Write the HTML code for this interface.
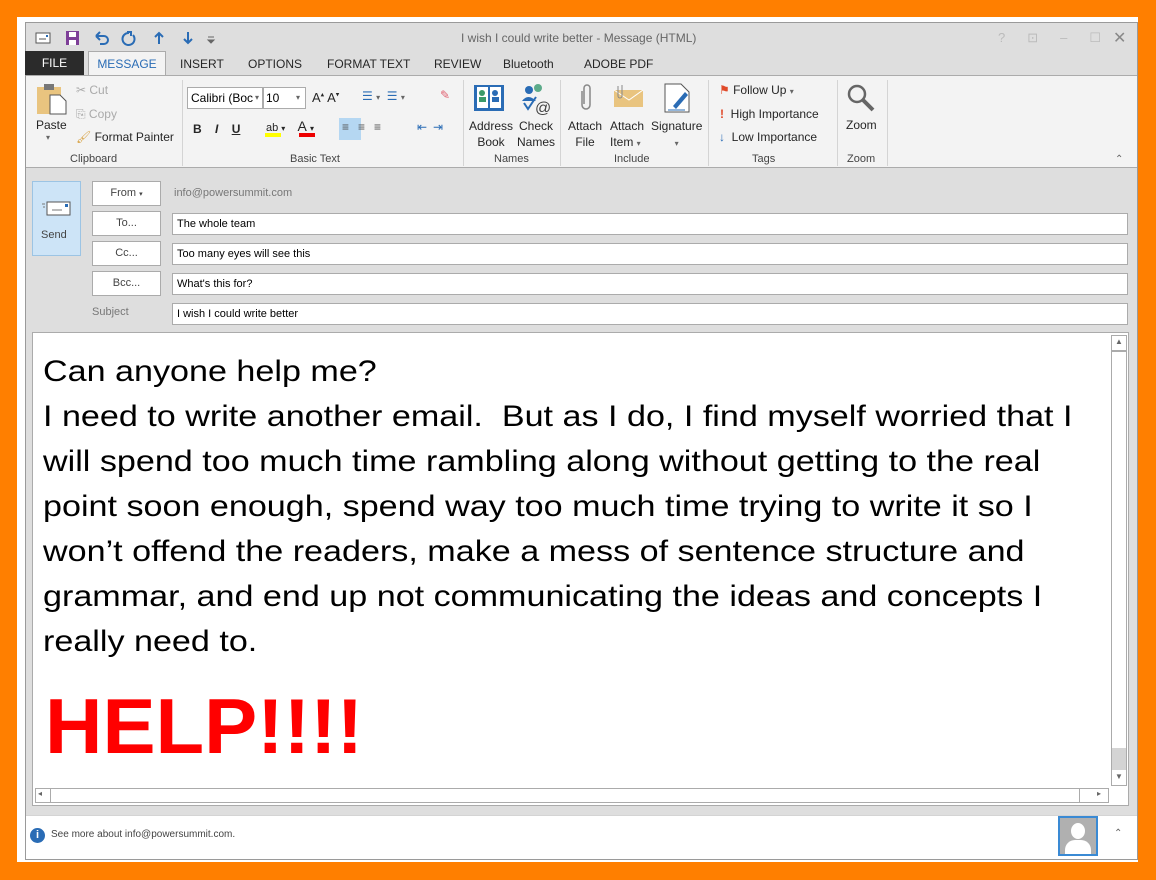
<!DOCTYPE html>
<html><head><meta charset="utf-8">
<style>
*{box-sizing:border-box;margin:0;padding:0}
body{width:1156px;height:880px;background:#ff7f00;position:relative;overflow:hidden;font-family:"Liberation Sans",sans-serif;color:#262626}
.a{position:absolute}
.t{font-size:12px;white-space:nowrap}
.btn{position:absolute;background:#fff;border:1px solid #ababab;font-size:11px;text-align:center;line-height:23px;color:#444}
.fld{position:absolute;left:172px;width:956px;height:22px;background:#fff;border:1px solid #ababab;font-size:11px;line-height:20px;padding-left:4px;color:#000}
.sep{position:absolute;top:80px;width:1px;height:86px;background:#d4d4d4}
.gl{position:absolute;top:153px;font-size:11px;color:#444}
.body{font-size:30px;line-height:45px;color:#000;white-space:nowrap;transform:scaleX(1.137);transform-origin:left top}
</style></head><body>
<div class="a" style="left:17px;top:17px;width:1121px;height:845px;background:#fff"></div>
<div class="a" style="left:25px;top:22px;width:1113px;height:838px;background:#dedede;border:1px solid #9a9a9a"></div>
<!-- title bar -->
<svg class="a" style="left:34px;top:30px" width="190" height="16">
<rect x="2" y="3" width="14" height="10" fill="#fff" stroke="#555"/><line x1="5" y1="9" x2="12" y2="9" stroke="#555"/><rect x="12" y="5" width="2" height="2" fill="#2a6cb5"/>
<rect x="32" y="1" width="13" height="14" fill="#7e3f98"/><rect x="35" y="2" width="7" height="5" fill="#fff"/><rect x="35" y="10" width="7" height="5" fill="#fff"/>
<path d="M62 6 h8 a4 4 0 0 1 0 8 h-4 M62 6 l4 -4 M62 6 l4 4" stroke="#2a6cb5" stroke-width="2" fill="none"/>
<path d="M95 3 a6 6 0 1 0 4 2 M93 2 h4 v4" stroke="#2a6cb5" stroke-width="2" fill="none"/>
<path d="M125 14 v-11 M121 7 l4 -4 4 4" stroke="#2a6cb5" stroke-width="2" fill="none"/>
<path d="M154 2 v11 M150 9 l4 4 4 -4" stroke="#2a6cb5" stroke-width="2" fill="none"/>
<path d="M174 7 h6 M174 10 l3 3 3 -3z" stroke="#666" fill="#666"/>
</svg>
<div class="a t" style="left:461px;top:31px;color:#666">I wish I could write better - Message (HTML)</div>
<div class="a t" style="left:998px;top:30px;color:#bbb;font-size:13px;letter-spacing:22px">?⊡–☐</div>
<div class="a t" style="left:1113px;top:28px;color:#888;font-size:16px">✕</div>
<!-- tabs -->
<div class="a" style="left:25px;top:51px;width:59px;height:24px;background:#2b2b2b;color:#fff;font-size:12px;text-align:center;line-height:24px">FILE</div>
<div class="a" style="left:88px;top:51px;width:78px;height:25px;background:#f3f3f3;border:1px solid #ababab;border-bottom:none;color:#2a6cb5;font-size:12px;text-align:center;line-height:24px">MESSAGE</div>
<div class="a t" style="left:180px;top:57px">INSERT</div>
<div class="a t" style="left:248px;top:57px">OPTIONS</div>
<div class="a t" style="left:327px;top:57px">FORMAT TEXT</div>
<div class="a t" style="left:434px;top:57px">REVIEW</div>
<div class="a t" style="left:503px;top:57px">Bluetooth</div>
<div class="a t" style="left:584px;top:57px">ADOBE PDF</div>
<!-- ribbon -->
<div class="a" style="left:26px;top:75px;width:1111px;height:93px;background:#f3f3f3;border-top:1px solid #ababab;border-bottom:1px solid #ababab"></div>
<svg class="a" style="left:36px;top:83px" width="32" height="32"><rect x="1" y="4" width="24" height="27" fill="#e9c47f"/><rect x="8" y="1" width="10" height="6" fill="#777"/><path d="M14 12 h10 l6 6 v13 h-16z" fill="#fff" stroke="#555"/></svg>
<div class="a t" style="left:36px;top:118px">Paste</div>
<div class="a t" style="left:46px;top:133px;font-size:8px;color:#666">▾</div>
<div class="a t" style="left:76px;top:83px;color:#aaa">✂ Cut</div>
<div class="a t" style="left:76px;top:107px;color:#aaa">⎘ Copy</div>
<div class="a t" style="left:76px;top:130px"><span style="color:#d9a54a">🖌</span> Format Painter</div>
<div class="gl" style="left:70px">Clipboard</div>
<div class="sep" style="left:182px"></div>
<div class="a t" style="left:187px;top:87px;width:76px;height:22px;background:#fff;border:1px solid #ababab;font-size:12px;line-height:20px;padding-left:3px;color:#000;overflow:hidden">Calibri (Boc<span style="position:absolute;right:3px;font-size:8px;color:#666">▾</span></div>
<div class="a t" style="left:263px;top:87px;width:43px;height:22px;background:#fff;border:1px solid #ababab;font-size:12px;line-height:20px;padding-left:2px;color:#000">10<span style="position:absolute;right:5px;font-size:8px;color:#666">▾</span></div>
<div class="a t" style="left:312px;top:90px;font-size:13px">A<sup style="font-size:7px">▴</sup> A<sup style="font-size:7px">▾</sup></div>
<div class="a t" style="left:362px;top:89px;color:#2a6cb5">☰ <span style="font-size:8px;color:#666">▾</span>&nbsp;&nbsp;☰ <span style="font-size:8px;color:#666">▾</span></div>
<div class="a t" style="left:440px;top:88px;color:#e06070">✎</div>
<div class="a t" style="left:193px;top:122px;font-weight:bold">B&nbsp;&nbsp;&nbsp;&nbsp;<i>I</i>&nbsp;&nbsp;&nbsp;&nbsp;<u>U</u></div>
<div class="a" style="left:265px;top:133px;width:16px;height:4px;background:#ff0"></div>
<div class="a" style="left:299px;top:133px;width:16px;height:4px;background:#e00"></div>
<div class="a t" style="left:266px;top:118px;font-size:11px">ab&nbsp;<span style="font-size:8px">▾</span>&nbsp;&nbsp;&nbsp;&nbsp;<span style="font-size:14px">A</span>&nbsp;<span style="font-size:8px">▾</span></div>
<div class="a" style="left:339px;top:118px;width:22px;height:22px;background:#b5d7f2"></div>
<div class="a t" style="left:342px;top:120px;color:#555;letter-spacing:9px">≡≡≡</div>
<div class="a t" style="left:417px;top:120px;color:#2a6cb5;letter-spacing:6px">⇤⇥</div>
<div class="gl" style="left:290px">Basic Text</div>
<div class="sep" style="left:463px"></div>
<svg class="a" style="left:473px;top:83px" width="32" height="30"><rect x="1" y="2" width="30" height="26" fill="#2a6cb5"/><rect x="4" y="4" width="11" height="21" fill="#fff"/><rect x="17" y="4" width="11" height="21" fill="#fff"/><circle cx="9" cy="10" r="3" fill="#3a9a6a"/><circle cx="22" cy="10" r="3" fill="#2a6cb5"/><rect x="6" y="14" width="7" height="5" fill="#3a9a6a"/><rect x="19" y="14" width="7" height="5" fill="#2a6cb5"/></svg>
<svg class="a" style="left:520px;top:83px" width="32" height="32"><circle cx="9" cy="7" r="4" fill="#2a6cb5"/><circle cx="18" cy="5" r="4" fill="#5cab8a"/><path d="M2 18 q6-8 14 0z" fill="#2a6cb5"/><path d="M4 20 l4 6 8 -12" stroke="#2a6cb5" stroke-width="2" fill="none"/><text x="15" y="30" font-size="16" fill="#444" font-family="Liberation Sans">@</text></svg>
<div class="a t" style="left:469px;top:118px;line-height:16px;text-align:center">Address<br>Book</div>
<div class="a t" style="left:517px;top:118px;line-height:16px;text-align:center">Check<br>Names</div>
<div class="gl" style="left:494px">Names</div>
<div class="sep" style="left:560px"></div>
<svg class="a" style="left:578px;top:83px" width="16" height="30"><path d="M4 8 v14 a4 4 0 0 0 8 0 v-17 a3 3 0 0 0 -6 0 v16" stroke="#888" stroke-width="1.5" fill="none"/></svg>
<svg class="a" style="left:613px;top:83px" width="32" height="26"><rect x="1" y="7" width="29" height="17" fill="#e9c47f"/><path d="M1 7 l15 10 14 -10" stroke="#fff" fill="none"/><path d="M5 3 v10 a2 2 0 0 0 4 0 v-11" stroke="#888" fill="none"/></svg>
<svg class="a" style="left:663px;top:82px" width="30" height="32"><path d="M2 2 h16 l8 8 v20 h-24z" fill="#fff" stroke="#555"/><path d="M10 24 l12 -14 3 3 -12 14z" fill="#2a6cb5"/><line x1="5" y1="28" x2="22" y2="28" stroke="#2a6cb5"/></svg>
<div class="a t" style="left:568px;top:118px;line-height:16px;text-align:center">Attach<br>File</div>
<div class="a t" style="left:610px;top:118px;line-height:16px">Attach<br>Item <span style="font-size:8px;color:#666">▾</span></div>
<div class="a t" style="left:651px;top:118px;line-height:16px;text-align:center">Signature<br><span style="font-size:8px;color:#666">▾</span></div>
<div class="gl" style="left:614px">Include</div>
<div class="sep" style="left:708px"></div>
<div class="a t" style="left:719px;top:83px"><span style="color:#e04a2a">⚑</span> Follow Up <span style="font-size:8px;color:#666">▾</span></div>
<div class="a t" style="left:720px;top:107px"><b style="color:#e04a2a">!</b>&nbsp; High Importance</div>
<div class="a t" style="left:719px;top:130px"><span style="color:#2a6cb5">↓</span>&nbsp; Low Importance</div>
<div class="gl" style="left:752px">Tags</div>
<div class="sep" style="left:837px"></div>
<svg class="a" style="left:846px;top:83px" width="30" height="30"><circle cx="11" cy="11" r="8" stroke="#666" stroke-width="2.5" fill="none"/><line x1="17" y1="17" x2="27" y2="27" stroke="#666" stroke-width="4"/></svg>
<div class="a t" style="left:846px;top:118px">Zoom</div>
<div class="gl" style="left:847px">Zoom</div>
<div class="sep" style="left:887px"></div>
<div class="a t" style="left:1115px;top:154px;font-size:10px;color:#666">⌃</div>
<!-- header -->
<div class="a" style="left:32px;top:181px;width:49px;height:75px;background:#cde4f7;border:1px solid #9cc4e4"></div>
<svg class="a" style="left:42px;top:201px" width="30" height="16"><rect x="5" y="1" width="23" height="13" fill="#fff" stroke="#555"/><rect x="23" y="3" width="3" height="3" fill="#2a6cb5"/><line x1="10" y1="9" x2="20" y2="9" stroke="#777"/><path d="M0 3h3M1 6h2" stroke="#777"/></svg>
<div class="a" style="left:41px;top:229px;font-size:11px;color:#444">Send</div>
<div class="btn" style="left:92px;top:181px;width:69px;height:25px">From <span style="font-size:7px">▾</span></div>
<div class="a" style="left:174px;top:187px;font-size:11px;color:#777">info@powersummit.com</div>
<div class="btn" style="left:92px;top:211px;width:69px;height:25px">To...</div>
<div class="btn" style="left:92px;top:241px;width:69px;height:25px">Cc...</div>
<div class="btn" style="left:92px;top:271px;width:69px;height:25px">Bcc...</div>
<div class="a" style="left:92px;top:306px;font-size:11px;color:#777">Subject</div>
<div class="fld" style="top:213px">The whole team</div>
<div class="fld" style="top:243px">Too many eyes will see this</div>
<div class="fld" style="top:273px">What's this for?</div>
<div class="fld" style="top:303px">I wish I could write better</div>
<!-- body -->
<div class="a" style="left:32px;top:332px;width:1097px;height:474px;background:#fff;border:1px solid #ababab"></div>
<div class="a body" style="left:43px;top:349px">Can anyone help me?<br>I need to write another email.&nbsp; But as I do, I find myself worried that I<br>will spend too much time rambling along without getting to the real<br>point soon enough, spend way too much time trying to write it so I<br>won’t offend the readers, make a mess of sentence structure and<br>grammar, and end up not communicating the ideas and concepts I<br>really need to.</div>
<div class="a" style="left:45px;top:676px;font-size:78px;font-weight:bold;color:#ff0000;line-height:100px;transform:scaleX(1.02);transform-origin:left">HELP!!!!</div>
<div class="a" style="left:1111px;top:335px;width:16px;height:451px;border:1px solid #ababab;background:#fff"></div>
<div class="a" style="left:1112px;top:350px;width:14px;height:2px;background:#ababab"></div>
<div class="a" style="left:1112px;top:748px;width:14px;height:22px;background:#d4d4d4"></div>
<div class="a" style="left:1115px;top:337px;font-size:8px;color:#666">▲</div>
<div class="a" style="left:1115px;top:772px;font-size:8px;color:#666">▼</div>
<div class="a" style="left:35px;top:788px;width:1074px;height:15px;border:1px solid #ababab;background:#fff"></div>
<div class="a" style="left:50px;top:788px;width:1030px;height:15px;border-left:1px solid #ababab;border-right:1px solid #ababab"></div>
<div class="a" style="left:38px;top:789px;font-size:8px;color:#666">◂</div>
<div class="a" style="left:1097px;top:789px;font-size:8px;color:#666">▸</div>
<!-- footer -->
<div class="a" style="left:26px;top:815px;width:1111px;height:44px;background:#fff;border-top:1px solid #d4d4d4"></div>
<div class="a" style="left:30px;top:828px;width:15px;height:15px;border-radius:50%;background:#2a6cb5;color:#fff;font-size:11px;font-weight:bold;text-align:center;line-height:15px">i</div>
<div class="a" style="left:51px;top:829px;font-size:10px;color:#444">See more about info@powersummit.com.</div>
<div class="a" style="left:1058px;top:816px;width:40px;height:40px;border:2px solid #3a8ad4;background:#b0b0b0;overflow:hidden"><div style="position:absolute;left:11px;top:5px;width:14px;height:16px;border-radius:50%;background:#fff"></div><div style="position:absolute;left:5px;top:22px;width:26px;height:20px;border-radius:10px 10px 0 0;background:#fff"></div></div>
<div class="a" style="left:1114px;top:828px;font-size:10px;color:#666">⌃</div>
</body></html>
